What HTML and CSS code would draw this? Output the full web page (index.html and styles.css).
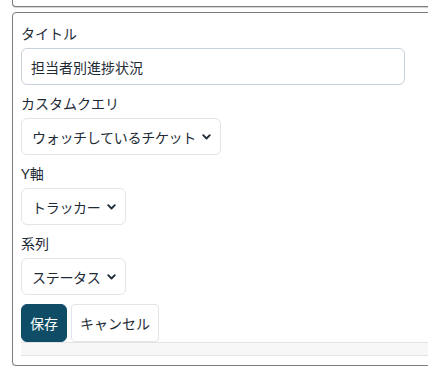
FILE: index.html
```html
<!DOCTYPE html>
<html lang="ja">
<head>
<meta charset="utf-8">
<title>担当者別進捗状況</title>
<link rel="stylesheet" href="styles.css">
</head>
<body>
  <div class="page">
    <div class="card card-prev"></div>

    <div class="card">
      <form class="chart-form" action="?">
        <div class="field">
          <label class="field-label" for="title">タイトル</label>
          <input class="text-input" type="text" id="title" value="担当者別進捗状況">
        </div>

        <div class="field">
          <div class="field-label">カスタムクエリ</div>
          <span class="select-box"><span class="select-text">ウォッチしているチケット</span>
            <svg class="chevron" width="9" height="6" viewBox="0 0 9 6"><path d="M1.2 1.2 L4.5 4.5 L7.8 1.2" fill="none" stroke="#1e2b37" stroke-width="1.8" stroke-linecap="round" stroke-linejoin="round"/></svg>
          </span>
        </div>

        <div class="field">
          <div class="field-label">Y軸</div>
          <span class="select-box"><span class="select-text">トラッカー</span>
            <svg class="chevron" width="9" height="6" viewBox="0 0 9 6"><path d="M1.2 1.2 L4.5 4.5 L7.8 1.2" fill="none" stroke="#1e2b37" stroke-width="1.8" stroke-linecap="round" stroke-linejoin="round"/></svg>
          </span>
        </div>

        <div class="field">
          <div class="field-label">系列</div>
          <span class="select-box"><span class="select-text">ステータス</span>
            <svg class="chevron" width="9" height="6" viewBox="0 0 9 6"><path d="M1.2 1.2 L4.5 4.5 L7.8 1.2" fill="none" stroke="#1e2b37" stroke-width="1.8" stroke-linecap="round" stroke-linejoin="round"/></svg>
          </span>
        </div>

        <div class="actions">
          <button type="button" class="btn btn-primary">保存</button>
          <button type="button" class="btn btn-plain">キャンセル</button>
        </div>
      </form>
      <div class="footer-bar"></div>
    </div>
  </div>
</body>
</html>
```

FILE: styles.css
```css
body {
    margin: 0;
    background: #fff;
    color: #1e2b37;
    font-family: Lato, "Noto Sans CJK JP", sans-serif;
    font-size: 14px;
    overflow: hidden;
}
.page {
    padding-left: 12px;
    margin-right: -20px;
}
.card {
    border: 1px solid #7d7d7d;
    border-radius: 4px;
    box-shadow: 0 1px 1px rgba(0, 0, 0, 0.18);
    background: #fff;
    padding: 11px 0 9px 8px;
}
.card-prev {
    height: 6px;
    padding: 0;
    border-top: none;
    border-radius: 0 0 4px 4px;
    margin-bottom: 5px;
}
.field {
    margin-bottom: 9px;
}
.field-label {
    display: block;
    line-height: 20px;
    margin-bottom: 4px;
}
.text-input {
    box-sizing: border-box;
    width: 384px;
    height: 37px;
    border: 1px solid #c9d1d9;
    border-radius: 6px;
    padding: 0 9px;
    font: inherit;
    color: #1e2b37;
}
.select-box {
    box-sizing: border-box;
    display: inline-flex;
    align-items: center;
    gap: 6px;
    height: 37px;
    padding: 0 9px 0 10px;
    border: 1px solid #e1e4e8;
    border-radius: 6px;
    background: #fff;
}
.select-text {
    letter-spacing: -0.3px;
}
.chevron {
    display: block;
    margin-top: 1px;
}
.actions {
    display: flex;
    gap: 4px;
}
.btn {
    box-sizing: border-box;
    height: 38px;
    padding: 0 8px;
    font: inherit;
    border-radius: 6px;
    cursor: pointer;
}
.btn-primary {
    background: #0f4d67;
    border: 1px solid #0f4d67;
    color: #fff;
}
.btn-plain {
    background: #fff;
    border: 1px solid #e1e4e8;
    border-radius: 4px;
    color: #1e2b37;
}
.footer-bar {
    height: 12px;
    background: #f7f7f7;
    border-top: 1px solid #e3e3e3;
    border-bottom: 1px solid #e3e3e3;
}
```
